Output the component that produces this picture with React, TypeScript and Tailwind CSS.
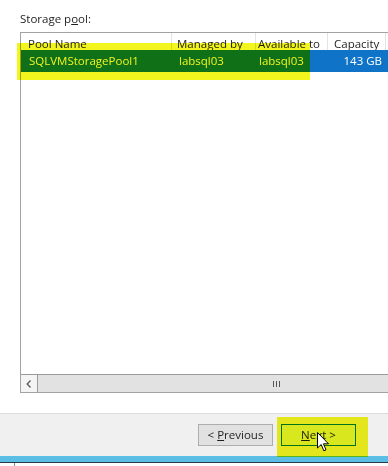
import React from 'react';

const font = { fontFamily: '"Open Sans", "Noto Sans", sans-serif' };

function Cursor() {
  return (
    <svg width="13" height="21" viewBox="0 0 13 21" className="absolute left-[317px] top-[432px]">
      <path
        d="M0.5 0.5 L0.5 16 L4.2 12.5 L6.8 18.8 L9 17.9 L6.5 11.8 L11.5 11.8 Z"
        fill="#ffffff"
        stroke="#000000"
        strokeWidth="1"
        strokeLinejoin="round"
      />
    </svg>
  );
}

export default function App() {
  return (
    <div className="relative w-[388px] h-[466px] overflow-hidden bg-white text-[11.5px] text-[#1e1e1e] flex flex-col" style={font}>
      <div className="pl-[20px] pt-[11px] h-[32px] leading-[16px]">
        Storage p<span className="underline">o</span>ol:
      </div>

      <div className="ml-[20px] w-[400px] h-[361px] border border-[#a3a3a3] border-r-0 flex flex-col">
        <div className="flex h-[17px] leading-[21px] bg-white">
          <div className="w-[151px] pl-[7px] border-r border-[#e3e3e3]">Pool Name</div>
          <div className="w-[84px] pl-[5px] border-r border-[#e3e3e3]">Managed by</div>
          <div className="w-[72px] pl-[2px] border-r border-[#e3e3e3] whitespace-nowrap overflow-hidden">Available to</div>
          <div className="w-[58px] pl-[6px] border-r border-[#e3e3e3]">Capacity</div>
        </div>
        <div className="flex h-[22px] leading-[22px] bg-[#0f74c8] text-white">
          <div className="w-[151px] pl-[8px]">SQLVMStoragePool1</div>
          <div className="w-[84px] pl-[7px]">labsql03</div>
          <div className="w-[72px] pl-[3px]">labsql03</div>
          <div className="w-[58px] pr-[4px] text-right">143 GB</div>
        </div>
        <div className="flex-1" />
        <div className="flex h-[18px] border-t border-[#9a9a9a]">
          <div className="w-[17px] flex items-center justify-center border-r border-[#9a9a9a] bg-[#f4f4f4]">
            <svg width="6" height="8" viewBox="0 0 6 8">
              <path d="M4.5 0.5 L1.2 4 L4.5 7.5" fill="none" stroke="#606060" strokeWidth="1.4" />
            </svg>
          </div>
          <div className="flex-1 relative bg-[#e2e2e2] flex items-center">
            <div className="ml-[235px] flex gap-[2px]">
              <div className="w-px h-[6px] bg-[#555]" />
              <div className="w-px h-[6px] bg-[#555]" />
              <div className="w-px h-[6px] bg-[#555]" />
            </div>
          </div>
        </div>
      </div>

      <div className="flex-1" />

      <div className="h-[43px] border-t border-[#dcdcdc] bg-[#f0f0f0] flex items-start justify-end pr-[32px] pt-[10px] gap-[8px]">
        <button className="w-[75px] h-[22px] border border-[#adadad] bg-[#e1e1e1] text-[11.5px] leading-[20px]">
          &lt; <span className="underline">P</span>revious
        </button>
        <button className="w-[75px] h-[22px] border border-[#0078d7] bg-[#e5f1fb] text-[11.5px] leading-[20px]">
          <span className="underline">N</span>ext &gt;
        </button>
      </div>
      <div className="h-[6px] bg-[#5cbde6]" />
      <div className="h-[1px] bg-[#2a3a44]" />
      <div className="h-[3px] bg-white flex">
        <div className="ml-[14px] w-px bg-[#8a8a8a]" />
      </div>

      <div className="absolute left-[17px] top-[43px] w-[293px] h-[37px] bg-[#f2f51e] mix-blend-multiply" />
      <div className="absolute left-[277px] top-[417px] w-[91px] h-[40px] bg-[#f2f51e] mix-blend-multiply" />
      <Cursor />
    </div>
  );
}
